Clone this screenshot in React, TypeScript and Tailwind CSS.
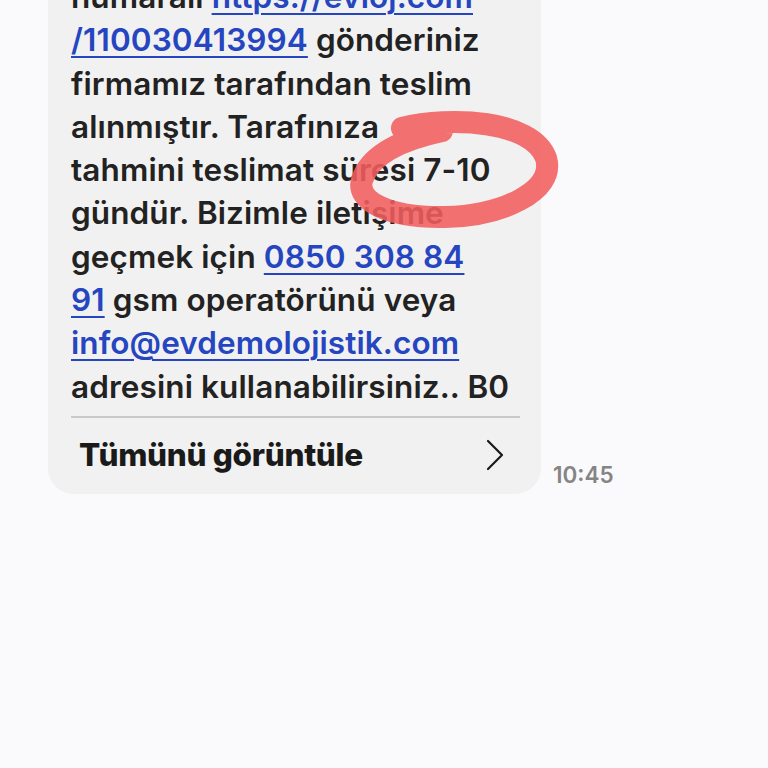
export default function App() {
  const font = { fontFamily: 'Inter, "Noto Sans", sans-serif' }
  const link = 'text-[#2546c0] underline underline-offset-[5px] decoration-2'
  return (
    <div className="relative w-[768px] h-[768px] overflow-hidden bg-[#fafafc]" style={font}>
      <div className="flex items-end gap-[12px] pl-[48px] mt-[-25px]">
        <div className="w-[493px] bg-[#f1f1f1] rounded-b-[26px] pl-[23px] pr-[21px]">
          <div className="text-[31.5px] leading-[43.3px] font-semibold text-[#222222] tracking-[0.1px] whitespace-nowrap">
            <div>numaralı <span className={link}>https://evloj.com</span></div>
            <div><span className={link}>/110030413994</span> gönderiniz</div>
            <div>firmamız tarafından teslim</div>
            <div>alınmıştır. Tarafınıza</div>
            <div>tahmini teslimat süresi 7-10</div>
            <div>gündür. Bizimle iletişime</div>
            <div>geçmek için <span className={link}>0850 308 84</span></div>
            <div><span className={link}>91</span> gsm operatörünü veya</div>
            <div><span className={link}>info@evdemolojistik.com</span></div>
            <div>adresini kullanabilirsiniz.. B0</div>
          </div>
          <div className="mt-[8px] h-[2px] bg-[#c9c9c9]" />
          <div className="flex items-center justify-between h-[76px] pl-[8px] pr-[14px] pb-[2px]">
            <span className="text-[31.5px] font-extrabold text-[#1a1a1a] tracking-[-0.3px]">Tümünü görüntüle</span>
            <svg width="22" height="32" viewBox="0 0 22 32" fill="none">
              <path d="M4 2 L18 16 L4 30" stroke="#1a1a1a" strokeWidth="2.2" strokeLinecap="round" strokeLinejoin="round" />
            </svg>
          </div>
        </div>
        <span className="text-[22.5px] font-semibold text-[#858585] pb-[2px]">10:45</span>
      </div>
      <svg className="absolute left-0 top-0 pointer-events-none" width="768" height="768" viewBox="0 0 768 768">
        <path
          d="M402 128 C450 116 532 120 546 158 C556 192 500 216 445 217 C386 218 356 200 362 180 C370 155 400 140 442 131"
          stroke="#f15d5d"
          strokeOpacity="0.88"
          strokeWidth="22"
          strokeLinecap="round"
          fill="none"
        />
      </svg>
    </div>
  )
}
